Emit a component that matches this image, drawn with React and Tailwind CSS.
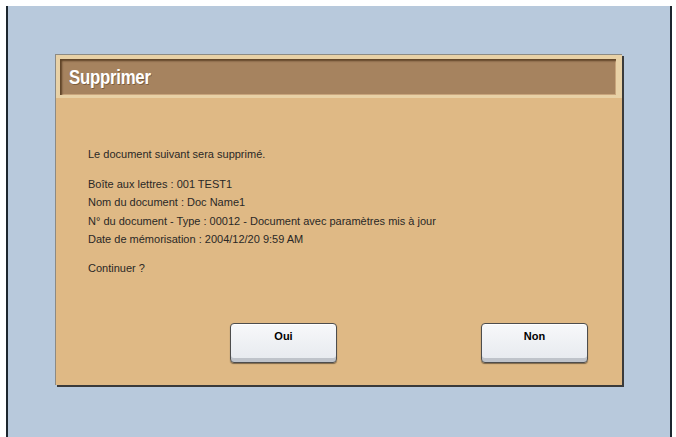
export default function App() {
  const lines = [
    "Boîte aux lettres : 001 TEST1",
    "Nom du document : Doc Name1",
    "N° du document - Type : 00012 - Document avec paramètres mis à jour",
    "Date de mémorisation : 2004/12/20 9:59 AM",
  ];

  const btn =
    "w-[107px] h-[40px] flex justify-center pt-[5px] rounded-[4px] border border-[#4d4d4d] bg-gradient-to-b from-[#f7f8fa] to-[#e6e9ee] shadow-[inset_0_-4px_0_#bfc3ca,inset_0_1px_0_#ffffff,0_1px_1px_rgba(0,0,0,0.45)] text-[11px] font-bold text-black leading-[14px]";

  return (
    <div
      className="w-[676px] h-[437px] bg-white pt-[6px] pl-[6px] pr-[4px] overflow-hidden"
      style={{ fontFamily: '"Liberation Sans", Arial, sans-serif' }}
    >
      <div className="h-[431px] bg-[#b8c9dc] border-l-2 border-r-2 border-[#1c262e] pl-[47px] pt-[48px]">
        <div className="w-[567px] h-[331px] flex flex-col bg-[#dfb985] border-l border-t border-[#8c8a84] shadow-[2px_2px_0_#3a3a3a]">
          <div className="bg-[#e8d1a6] pt-[4px] pl-[4px] pr-[6px] pb-[3px]">
            <div className="h-[36px] bg-[#a6835f] shadow-[inset_2px_2px_2px_#5e4327,inset_-1px_-1px_0_#c9a57c] flex items-center pl-[9px]">
              <span
                className="inline-block text-white font-bold text-[20px] leading-[22px] scale-x-[0.84] origin-left tracking-[-0.3px]"
                style={{ textShadow: "1px 1px 0 rgba(70,45,20,0.45)" }}
              >
                Supprimer
              </span>
            </div>
          </div>

          <div className="pl-[32px] pt-[47px] text-[11px] leading-[18.5px] text-[#2a2826]">
            <p>Le document suivant sera supprimé.</p>
            <div className="mt-[11px]">
              {lines.map((l) => (
                <p key={l}>{l}</p>
              ))}
            </div>
            <p className="mt-[10px]">Continuer ?</p>
          </div>

          <div className="flex mt-[46px] pl-[174px] pr-[34px]">
            <button className={btn}>Oui</button>
            <button className={`${btn} ml-auto`}>Non</button>
          </div>
        </div>
      </div>
    </div>
  );
}
